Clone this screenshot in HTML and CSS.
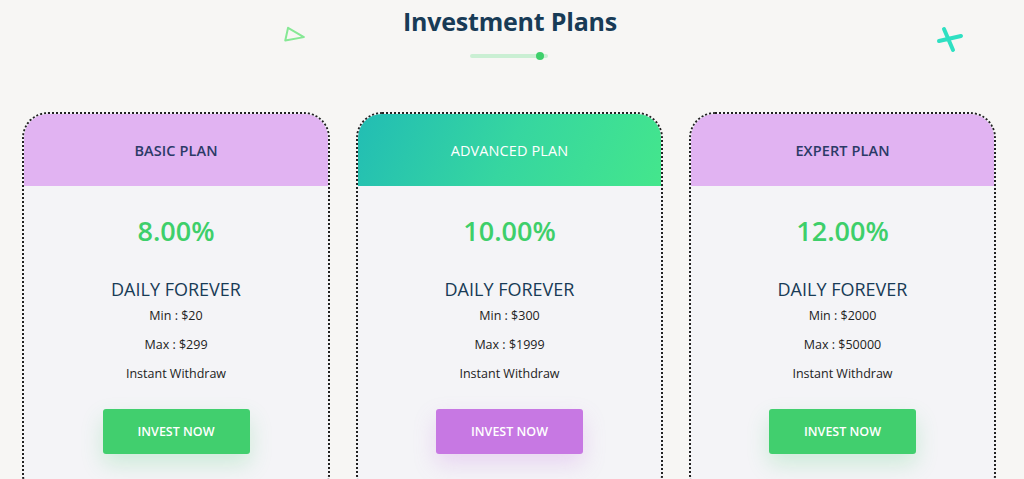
FILE: index.html
```html
<!DOCTYPE html>
<html lang="en">
<head>
<meta charset="utf-8">
<title>Investment Plans</title>
<link rel="stylesheet" href="styles.css">
</head>
<body>
<section class="plans">
  <svg class="deco deco-tri" width="24" height="20" viewBox="0 0 24 20"><path d="M3 3 L20 10 L2 16 Z" fill="none" stroke="#86e895" stroke-width="2" stroke-linejoin="round"/></svg>
  <svg class="deco deco-x" width="30" height="30" viewBox="0 0 30 30"><path d="M9 4 L18 25 M4 16 L26 11" stroke="#2fe0c2" stroke-width="4" stroke-linecap="round"/></svg>
  <header class="plans-head">
    <h2 class="plans-title">Investment Plans</h2>
    <div class="title-bar"><span class="title-dot"></span></div>
  </header>
  <div class="plan-grid">
    <article class="plan">
      <div class="plan-top">BASIC PLAN</div>
      <div class="plan-body">
        <div class="plan-rate">8.00%</div>
        <div class="plan-term">DAILY FOREVER</div>
        <p class="plan-line">Min : $20</p>
        <p class="plan-line">Max : $299</p>
        <p class="plan-line">Instant Withdraw</p>
        <a class="plan-btn" href="#">INVEST NOW</a>
      </div>
    </article>
    <article class="plan plan-featured">
      <div class="plan-top">ADVANCED PLAN</div>
      <div class="plan-body">
        <div class="plan-rate">10.00%</div>
        <div class="plan-term">DAILY FOREVER</div>
        <p class="plan-line">Min : $300</p>
        <p class="plan-line">Max : $1999</p>
        <p class="plan-line">Instant Withdraw</p>
        <a class="plan-btn" href="#">INVEST NOW</a>
      </div>
    </article>
    <article class="plan">
      <div class="plan-top">EXPERT PLAN</div>
      <div class="plan-body">
        <div class="plan-rate">12.00%</div>
        <div class="plan-term">DAILY FOREVER</div>
        <p class="plan-line">Min : $2000</p>
        <p class="plan-line">Max : $50000</p>
        <p class="plan-line">Instant Withdraw</p>
        <a class="plan-btn" href="#">INVEST NOW</a>
      </div>
    </article>
  </div>
</section>
</body>
</html>
```
FILE: styles.css
```css
* { box-sizing: border-box; }
html, body { margin: 0; padding: 0; }
body {
  background: #f7f6f4;
  font-family: "Open Sans", "Noto Sans", "Liberation Sans", sans-serif;
  color: #222;
  overflow: hidden;
}
.plans {
  position: relative;
  padding-top: 4px;
}
.deco { position: absolute; }
.deco-tri { left: 284px; top: 26px; transform: rotate(8deg); }
.deco-x { left: 935px; top: 25px; }
.plans-head {
  display: flex;
  flex-direction: column;
  align-items: center;
}
.plans-title {
  margin: 0 4px 0 0;
  font-size: 25px;
  font-weight: 700;
  color: #183b56;
  line-height: 34px;
  letter-spacing: -0.2px;
}
.title-bar {
  position: relative;
  margin: 16px 6px 0 0;
  width: 78px;
  height: 4px;
  border-radius: 2px;
  background: #caefd3;
}
.title-dot {
  position: absolute;
  right: 4px;
  top: -2px;
  width: 8px;
  height: 8px;
  border-radius: 50%;
  background: #3ecf6a;
}
.plan-grid {
  display: grid;
  grid-template-columns: 308px 307px 307px;
  column-gap: 26px;
  margin: 54px 0 0 22px;
}
.plan {
  border: 2px dotted #222;
  border-radius: 26px;
  overflow: hidden;
  background: #f4f4f7;
  height: 390px;
}
.plan-top {
  height: 72px;
  display: flex;
  align-items: center;
  justify-content: center;
  background: #e1b3f2;
  color: #2b3a67;
  font-size: 14.5px;
  font-weight: 600;
  letter-spacing: 0.1px;
}
.plan-featured .plan-top {
  background: linear-gradient(115deg, #22bdb4 0%, #36d6a0 50%, #44e68c 100%);
  color: #fff;
  font-weight: 500;
}
.plan-body {
  display: flex;
  flex-direction: column;
  align-items: center;
  padding-top: 27px;
}
.plan-rate {
  font-size: 27px;
  font-weight: 600;
  color: #3ecf6a;
  line-height: 36px;
}
.plan-term {
  margin-top: 27px;
  font-size: 18px;
  font-weight: 500;
  color: #183b56;
  line-height: 26px;
}
.plan-line {
  margin: 0;
  font-size: 12.5px;
  line-height: 29px;
  color: #222;
}
.plan-term + .plan-line { margin-top: -1px; }
.plan-btn {
  margin-top: 21px;
  width: 147px;
  height: 45px;
  display: flex;
  align-items: center;
  justify-content: center;
  background: #41cf6e;
  color: #fff;
  font-size: 12.5px;
  font-weight: 600;
  text-decoration: none;
  border-radius: 3px;
  box-shadow: 0 10px 22px rgba(65, 207, 110, 0.22);
}
.plan-featured .plan-btn {
  background: #c778e3;
  box-shadow: 0 10px 22px rgba(199, 120, 227, 0.25);
}
```
